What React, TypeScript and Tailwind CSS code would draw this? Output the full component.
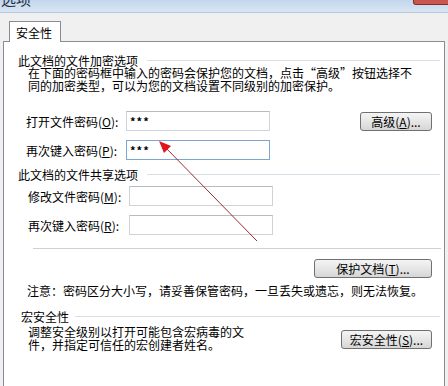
import React from "react";

// ──────────────────────────────────────────────────────────────
// small pieces
// ──────────────────────────────────────────────────────────────
function GroupHeader({ title, pl, gap }: { title: string; pl: string; gap: string }) {
  return (
    <div className={`flex items-center h-[13px] ${pl} pr-[4px]`}>
      <span className="leading-[13px] whitespace-nowrap">{title}</span>
      <div className={`flex-1 h-px bg-[#d5dfe5] ${gap}`} />
    </div>
  );
}

function WinButton({ children, w }: { children: React.ReactNode; w: string }) {
  return (
    <button
      className={`${w} h-[19px] shrink-0 rounded-[3px] border border-[#707070] bg-gradient-to-b from-[#f4f4f4] via-[#e6e6e6] to-[#d6d6d6] text-[12px] leading-[17px] text-black flex items-center justify-center`}
    >
      {children}
    </button>
  );
}

function Field({
  label,
  hotkey,
  value,
  focused,
  labelW,
  pl,
}: {
  label: string;
  hotkey: string;
  value?: string;
  focused?: boolean;
  labelW: string;
  pl: string;
}) {
  return (
    <div className={`flex items-center ${pl}`}>
      <span className={`${labelW} shrink-0 whitespace-nowrap leading-[13px]`}>
        {label}(<span className="underline">{hotkey}</span>):
      </span>
      <div
        className={`w-[144px] h-[20px] border bg-white flex items-center pl-[3px] text-[11px] font-bold tracking-[1px] ${
          focused ? "border-[#7aa7d1]" : "border-[#cfd3d8] border-t-[#b8bcc2]"
        }`}
      >
        {value}
      </div>
    </div>
  );
}

// ──────────────────────────────────────────────────────────────
// DIALOG
// ──────────────────────────────────────────────────────────────
export default function App() {
  return (
    <div className="relative w-[448px] h-[386px] overflow-hidden bg-[#f0f0f0] text-[12px] text-black font-['Noto_Sans_CJK_SC',sans-serif]">
      {/* title bar */}
      <div className="h-[13px] overflow-hidden bg-gradient-to-b from-[#c3d6ec] to-[#d9e6f4] border-b border-[#b9c9dc]">
        <div className="-mt-[10px] pl-[1px] text-[15px] leading-[18px] text-[#1e2f45]">选项</div>
      </div>
      <div className="absolute top-0 left-[413px] w-[40px] h-[5px] rounded-bl-[3px] bg-[#c9574f] border border-[#8a2c25] border-t-0" />

      {/* tab */}
      <div className="mt-[8px] pl-[9px]">
        <div className="w-[52px] h-[21px] bg-white border border-[#898c95] border-b-0 pl-[6px] flex items-center leading-[13px] relative z-10 -mb-px">
          安全性
        </div>
      </div>

      {/* tab panel */}
      <div className="ml-[3px] w-[442px] h-[360px] bg-white border border-[#898c95] flex flex-col">
        <div className="mt-[12px]">
          <GroupHeader title="此文档的文件加密选项" pl="pl-[14px]" gap="ml-[9px]" />
        </div>
        <div className="-mt-[1px] pl-[24px] leading-[13px]">
          <div className="whitespace-nowrap">在下面的密码框中输入的密码会保护您的文档，点击“高级”按钮选择不</div>
          <div className="whitespace-nowrap">同的加密类型，可以为您的文档设置不同级别的加密保护。</div>
        </div>

        <div className="mt-[19px] flex items-center pr-[12px]">
          <Field label="打开文件密码" hotkey="O" value="***" labelW="w-[100px]" pl="pl-[22px]" />
          <div className="ml-auto mt-[1px]">
            <WinButton w="w-[72px]">
              高级(<span className="underline">A</span>)...
            </WinButton>
          </div>
        </div>
        <div className="mt-[9px]">
          <Field label="再次键入密码" hotkey="P" value="***" focused labelW="w-[100px]" pl="pl-[22px]" />
        </div>

        <div className="mt-[8px]">
          <GroupHeader title="此文档的文件共享选项" pl="pl-[14px]" gap="ml-[9px]" />
        </div>
        <div className="mt-[5px]">
          <Field label="修改文件密码" hotkey="M" labelW="w-[101px]" pl="pl-[24px]" />
        </div>
        <div className="mt-[9px]">
          <Field label="再次键入密码" hotkey="R" labelW="w-[101px]" pl="pl-[24px]" />
        </div>

        <div className="mt-[13px] ml-[29px] mr-[3px] h-px bg-[#d0d0d0]" />

        <div className="mt-[10px] flex justify-end pr-[12px]">
          <WinButton w="w-[118px]">
            保护文档(<span className="underline">T</span>)...
          </WinButton>
        </div>

        <div className="mt-[6px] pl-[23px] leading-[13px] whitespace-nowrap">
          注意：密码区分大小写，请妥善保管密码，一旦丢失或遗忘，则无法恢复。
        </div>

        <div className="mt-[13px]">
          <GroupHeader title="宏安全性" pl="pl-[17px]" gap="ml-[6px]" />
        </div>
        <div className="flex items-start pr-[12px]">
          <div className="pl-[24px] leading-[13px] mt-[2px]">
            <div className="whitespace-nowrap">调整安全级别以打开可能包含宏病毒的文</div>
            <div className="whitespace-nowrap">件，并指定可信任的宏创建者姓名。</div>
          </div>
          <div className="ml-auto mt-[7px]">
            <WinButton w="w-[91px]">
              宏安全性(<span className="underline">S</span>)...
            </WinButton>
          </div>
        </div>
      </div>

      {/* annotation arrow */}
      <svg className="absolute left-0 top-0 pointer-events-none" width="448" height="386">
        <line x1="257" y1="241" x2="164" y2="146" stroke="#9e2a33" strokeWidth="1" />
        <polygon points="159,141 171,146 164,153" fill="#e0161c" />
      </svg>
    </div>
  );
}
